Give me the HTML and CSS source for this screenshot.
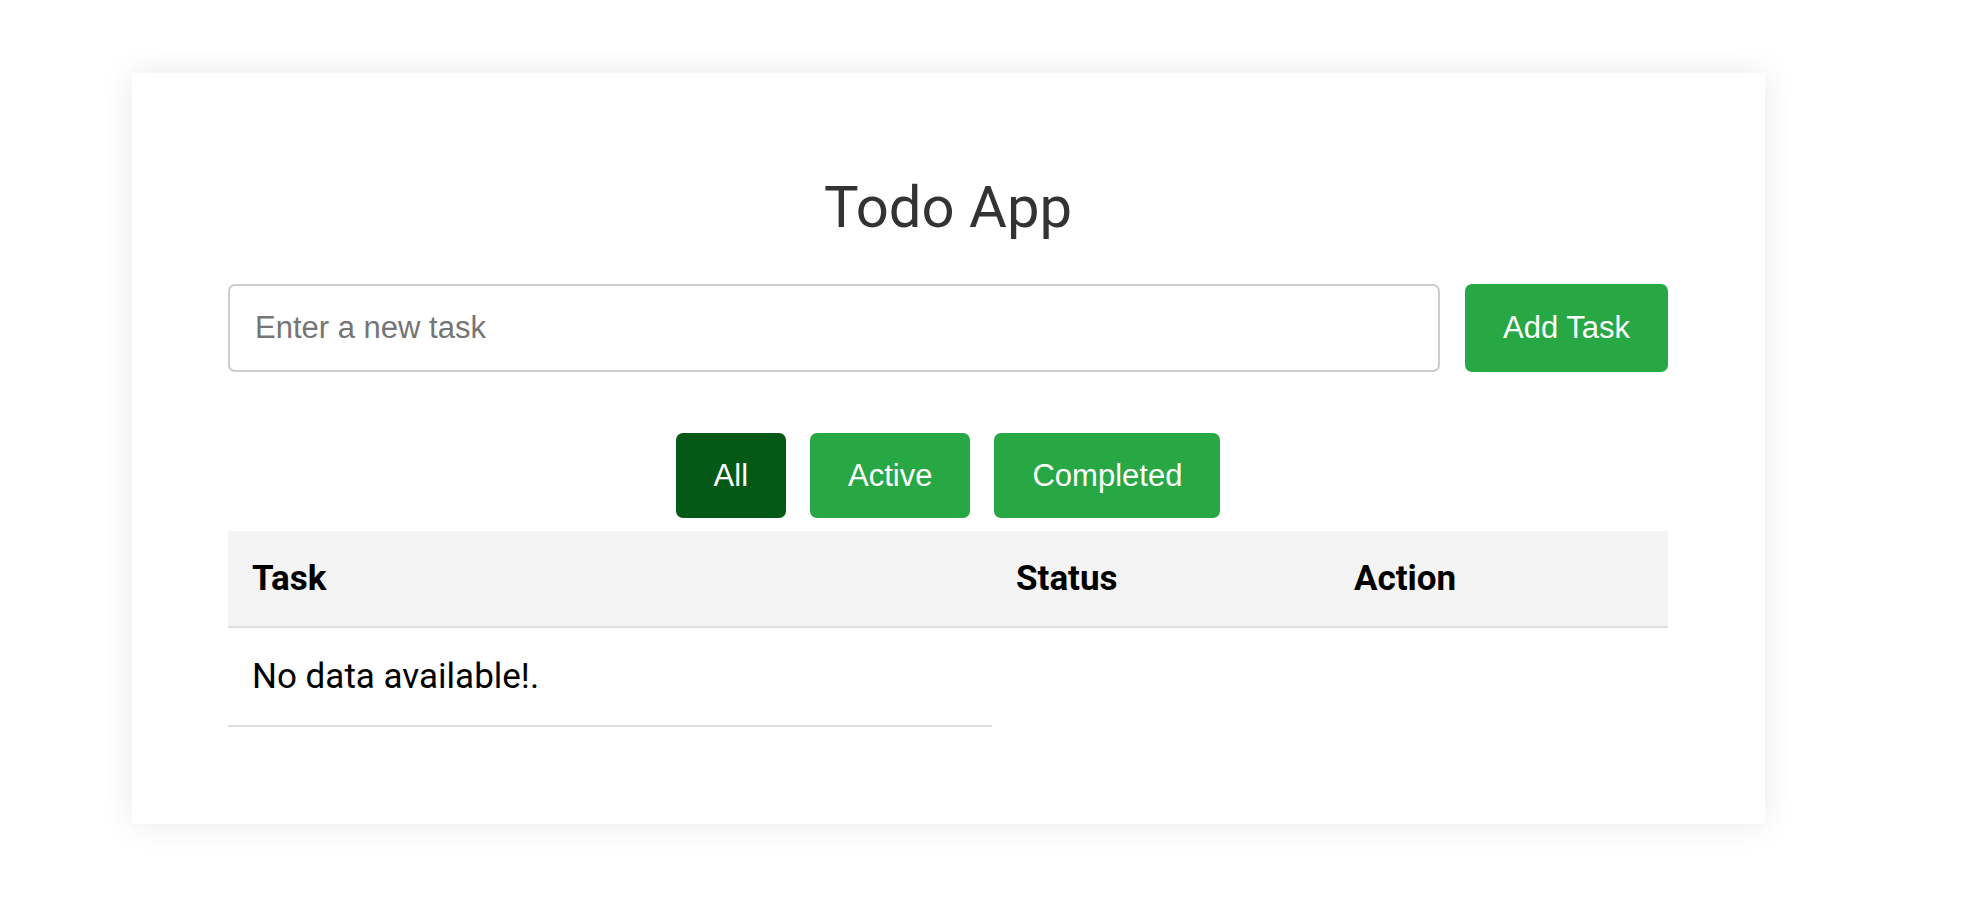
FILE: index.html
```html
<!DOCTYPE html>
<html lang="en">
<head>
<meta charset="utf-8">
<title>Todo App</title>
<link rel="stylesheet" href="styles.css">
</head>
<body>
<div class="card">
  <h1 class="title">Todo App</h1>
  <div class="add-row">
    <input class="task-input" type="text" placeholder="Enter a new task">
    <button class="btn btn-add">Add Task</button>
  </div>
  <div class="filters">
    <button class="btn btn-filter is-active">All</button>
    <button class="btn btn-filter">Active</button>
    <button class="btn btn-filter">Completed</button>
  </div>
  <table class="tasks">
    <colgroup>
      <col class="col-task">
      <col class="col-status">
      <col class="col-action">
    </colgroup>
    <thead>
      <tr><th>Task</th><th>Status</th><th>Action</th></tr>
    </thead>
    <tbody>
      <tr><td>No data available!.</td></tr>
    </tbody>
  </table>
</div>
</body>
</html>
```

FILE: styles.css
```css
html, body {
  margin: 0;
  padding: 0;
  background: #ffffff;
}
body {
  font-family: Roboto, "Liberation Sans", Arial, sans-serif;
  padding: 73px 0 60px 132px;
}
.card {
  width: 1633px;
  box-sizing: border-box;
  padding: 100px 97px 97px 96px;
  background: #fff;
  box-shadow: 0 0 30px rgba(0, 0, 0, 0.09);
}
.title {
  margin: 0 0 43px;
  font-family: Roboto, sans-serif;
  font-weight: 400;
  font-size: 58px;
  line-height: 68px;
  color: #333;
  text-align: center;
}
.add-row {
  display: flex;
  gap: 25px;
}
.task-input {
  flex: 1;
  box-sizing: border-box;
  height: 88px;
  margin: 0;
  padding: 0 25px;
  border: 2px solid #cccccc;
  border-radius: 7px;
  font-family: "Liberation Sans", Arial, sans-serif;
  font-size: 31px;
  color: #333;
  outline: none;
}
.task-input::placeholder {
  color: #757575;
}
.btn {
  box-sizing: border-box;
  margin: 0;
  border: none;
  border-radius: 7px;
  background: #28a745;
  color: #fff;
  font-family: "Liberation Sans", Arial, sans-serif;
  font-size: 31px;
  cursor: pointer;
}
.btn-add {
  height: 88px;
  padding: 0 38px;
}
.filters {
  display: flex;
  justify-content: center;
  gap: 24px;
  margin-top: 61px;
}
.btn-filter {
  height: 85px;
  padding: 0 38px;
}
.btn-filter.is-active {
  background: #055916;
}
.tasks {
  width: 100%;
  margin-top: 13px;
  border-collapse: collapse;
  table-layout: fixed;
  font-family: Roboto, sans-serif;
  font-size: 35px;
  color: #000;
}
.col-task { width: 764px; }
.col-status { width: 338px; }
.col-action { width: 338px; }
.tasks th {
  background: #f4f4f4;
  font-weight: 700;
  text-align: left;
  padding: 27px 24px;
  line-height: 41px;
  border-bottom: 2px solid #dddddd;
}
.tasks td {
  padding: 28px 24px;
  line-height: 41px;
  border-bottom: 2px solid #dddddd;
}
```
